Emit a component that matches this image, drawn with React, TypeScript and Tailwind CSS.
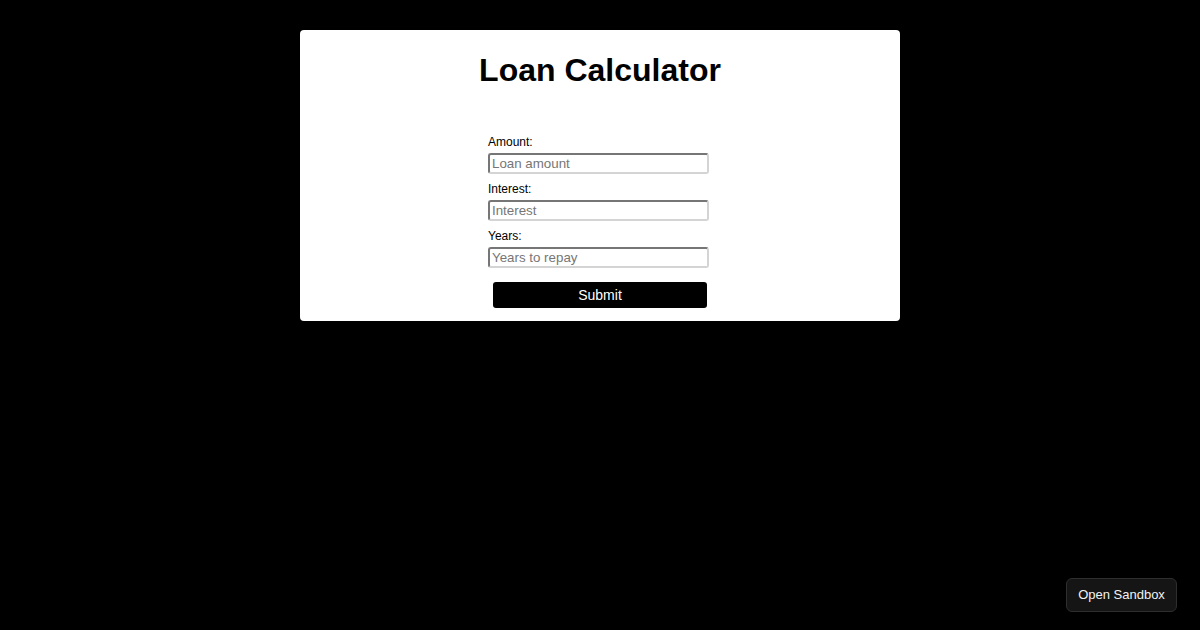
import React from "react";

export default function App() {
  const fields = [
    { label: "Amount:", ph: "Loan amount" },
    { label: "Interest:", ph: "Interest" },
    { label: "Years:", ph: "Years to repay" },
  ];
  return (
    <div className="relative w-[1200px] h-[630px] bg-black overflow-hidden" style={{ fontFamily: '"Liberation Sans", Arial, sans-serif' }}>
      <div className="pt-[30px]">
        <div className="mx-auto w-[600px] bg-white rounded-[4px] pb-[13px]">
          <h1 className="text-center text-[32px] font-bold text-black leading-[37px] pt-[22px] m-0">Loan Calculator</h1>
          <form className="mx-auto w-[224px] mt-[46px] flex flex-col" onSubmit={(e) => e.preventDefault()}>
            {fields.map((f) => (
              <div key={f.label} className="flex flex-col">
                <label className="block text-[12px] leading-[14px] text-black mb-[4px]">{f.label}</label>
                <input
                  placeholder={f.ph}
                  className="block w-[221px] h-[21px] mb-[8px] px-[2px] text-[13.33px] text-black placeholder:text-[#767676] bg-white border-2 border-t-[#767676] border-l-[#767676] border-b-[#d4d4d4] border-r-[#d4d4d4] rounded-[3px] outline-none"
                />
              </div>
            ))}
            <button
              type="submit"
              className="mt-[6px] ml-[5px] w-[214px] h-[26px] bg-black text-white text-[14px] rounded-[3px]"
            >
              Submit
            </button>
          </form>
        </div>
      </div>
      <button
        className="absolute right-[23px] bottom-[18px] w-[111px] h-[34px] bg-[#151515] border border-[#2e2e2e] rounded-[6px] text-[13px] text-[#f2f2f2]"
        style={{ fontFamily: '"Liberation Sans", Arial, sans-serif' }}
      >
        Open Sandbox
      </button>
    </div>
  );
}
